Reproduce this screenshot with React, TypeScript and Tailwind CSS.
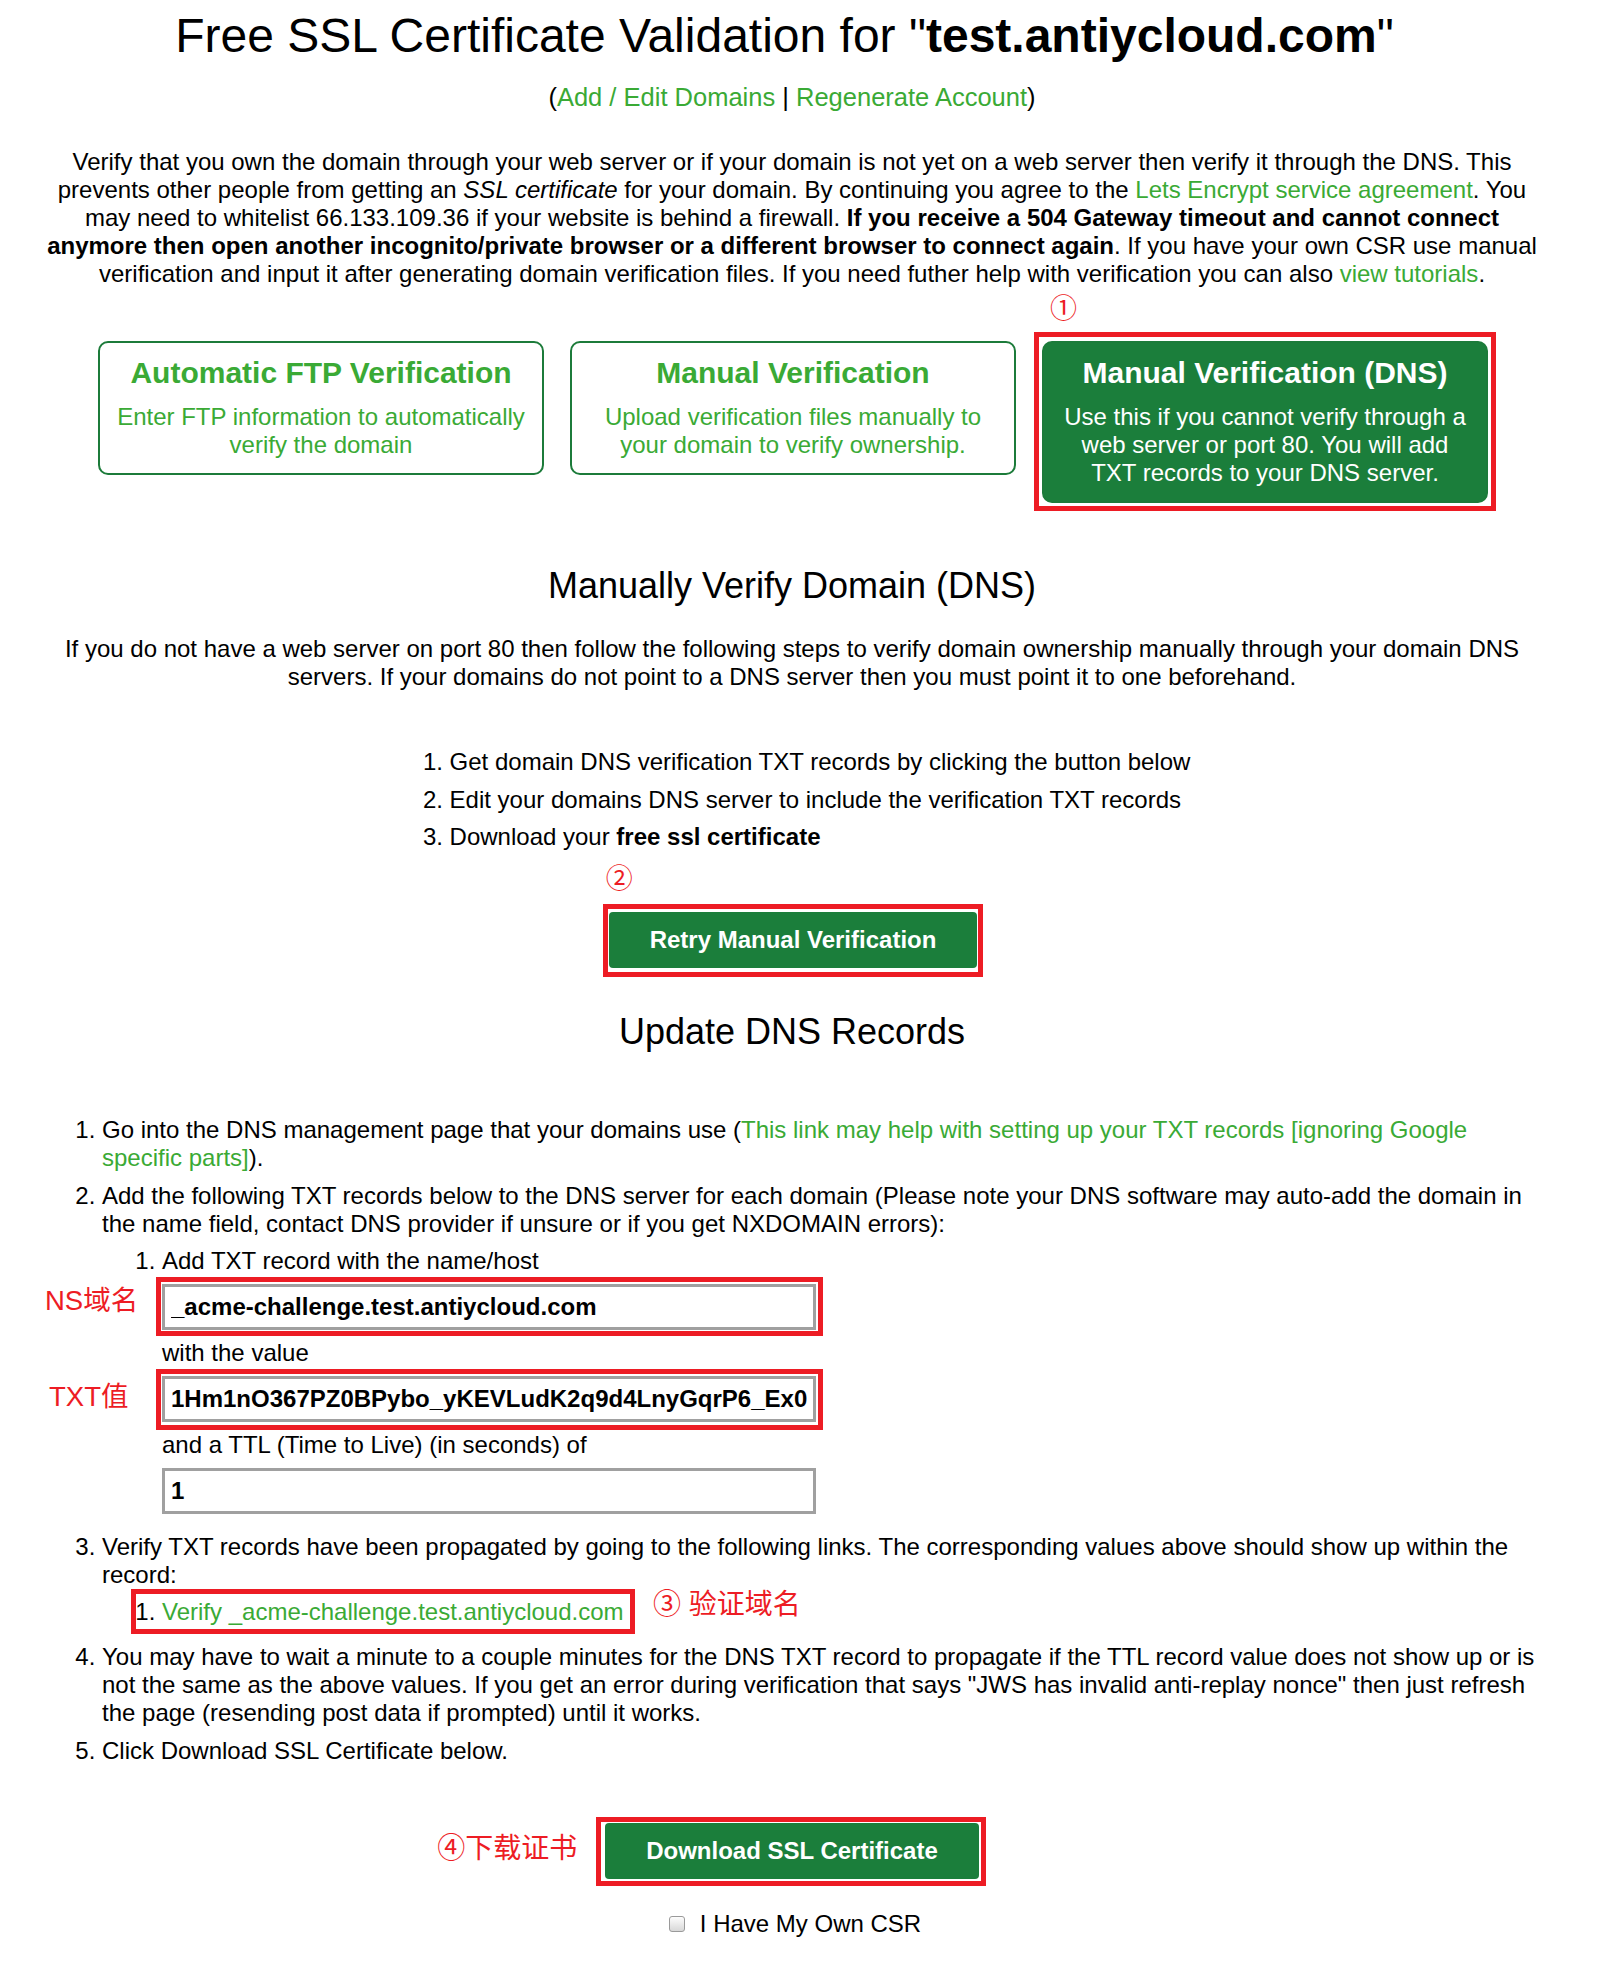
import type { ReactNode } from "react";

const cn = (...parts: (string | false | undefined)[]) => parts.filter(Boolean).join(" ");

const Annotation = ({ className, children }: { className: string; children: ReactNode }) => (
  <span
    className={cn(
      "pointer-events-none absolute whitespace-nowrap leading-[36px] text-[#ed1c24] font-['Liberation_Sans','Noto_Sans_CJK_SC',sans-serif]",
      className
    )}
  >
    {children}
  </span>
);

const RedBox = ({ className }: { className: string }) => (
  <span className={cn("pointer-events-none absolute border-[5px] border-[#ed1c24]", className)} />
);

const GreenLink = ({ children }: { children: ReactNode }) => (
  <a href="#" className="text-[#3aaa35]">
    {children}
  </a>
);

const VerifyCard = ({ title, text, active }: { title: string; text: string; active?: boolean }) => (
  <div
    className={cn(
      "w-[446px] rounded-[10px] border-2 border-[#1c7b3a] px-[14px] pt-[13px] pb-[14px] text-center",
      active ? "bg-[#1b7e3b] text-white" : "bg-white text-[#3aaa35]"
    )}
  >
    <h3 className="text-[30px] font-bold leading-[34px]">{title}</h3>
    <p className="mt-[13px] text-[24px] leading-[28px]">{text}</p>
  </div>
);

const GreenButton = ({ children }: { children: ReactNode }) => (
  <button className="rounded-[4px] bg-[#1b7e3b] px-[41px] py-[14px] text-[24px] font-bold leading-[28px] text-white">
    {children}
  </button>
);

const RecordInput = ({ value }: { value: string }) => (
  <input
    readOnly
    value={value}
    className="block h-[46px] w-[654px] border-[3px] border-[#a0a0a0] bg-white px-[6px] text-[24px] font-bold text-black outline-none"
  />
);

const App = () => {
  return (
    <div className="min-h-[1973px] w-full bg-white text-black font-['Liberation_Sans',Arial,'Noto_Sans_CJK_SC',sans-serif]">
      <main className="w-[1584px] px-[42px] pt-[8px] pb-[34px] text-center">
        <h1 className="pr-[15px] text-[48px] leading-[55px]">
          Free SSL Certificate Validation for "<b>test.antiycloud.com</b>"
        </h1>
        <p className="mt-[20px] text-[25.5px] leading-[29px]">
          (<GreenLink>Add / Edit Domains</GreenLink> | <GreenLink>Regenerate Account</GreenLink>)
        </p>

        <p className="mt-[36px] text-[24px] leading-[28px]">
          Verify that you own the domain through your web server or if your domain is not yet on a web server then
          verify it through the DNS. This prevents other people from getting an <i>SSL certificate</i> for your
          domain. By continuing you agree to the <GreenLink>Lets Encrypt service agreement</GreenLink>. You may need
          to whitelist 66.133.109.36 if your website is behind a firewall.{" "}
          <b>
            If you receive a 504 Gateway timeout and cannot connect anymore then open another incognito/private
            browser or a different browser to connect again
          </b>
          . If you have your own CSR use manual verification and input it after generating domain verification files.
          If you need futher help with verification you can also <GreenLink>view tutorials</GreenLink>.
        </p>

        <div className="mt-[53px] flex items-start justify-center gap-[26px] pl-[2px]">
          <VerifyCard
            title="Automatic FTP Verification"
            text="Enter FTP information to automatically verify the domain"
          />
          <VerifyCard
            title="Manual Verification"
            text="Upload verification files manually to your domain to verify ownership."
          />
          <div className="relative">
            <VerifyCard
              active
              title="Manual Verification (DNS)"
              text="Use this if you cannot verify through a web server or port 80. You will add TXT records to your DNS server."
            />
            <RedBox className="left-[-8px] right-[-8px] top-[-9px] bottom-[-8px]" />
            <Annotation className="left-[8px] top-[-50px] text-[27px]">①</Annotation>
          </div>
        </div>

        <h2 className="mt-[62px] text-[36px] leading-[41px]">Manually Verify Domain (DNS)</h2>
        <p className="mt-[29px] text-[24px] leading-[28px]">
          If you do not have a web server on port 80 then follow the following steps to verify domain ownership
          manually through your domain DNS servers. If your domains do not point to a DNS server then you must point
          it to one beforehand.
        </p>

        <div className="mt-[57px] flex justify-center pr-[4px]">
          <ol className="list-decimal pl-[60px] text-left text-[24px] leading-[28px]">
            <li className="pb-[9.5px]">Get domain DNS verification TXT records by clicking the button below</li>
            <li className="pb-[9.5px]">Edit your domains DNS server to include the verification TXT records</li>
            <li className="pb-[9.5px]">
              Download your <b>free ssl certificate</b>
            </li>
          </ol>
        </div>

        <div className="mt-[51.5px] flex justify-center pl-[2px]">
          <div className="relative">
            <GreenButton>Retry Manual Verification</GreenButton>
            <RedBox className="left-[-6px] right-[-6px] top-[-8px] bottom-[-9px]" />
            <Annotation className="left-[-3px] top-[-51px] text-[27px]">②</Annotation>
          </div>
        </div>

        <h2 className="mt-[43px] text-[36px] leading-[41px]">Update DNS Records</h2>

        <ol className="mt-[64px] list-decimal pl-[60px] text-left text-[24px] leading-[28px]">
          <li className="pb-[9.5px]">
            Go into the DNS management page that your domains use (
            <GreenLink>This link may help with setting up your TXT records [ignoring Google specific parts]</GreenLink>
            ).
          </li>
          <li className="pb-[9.5px]">
            Add the following TXT records below to the DNS server for each domain (Please note your DNS software may
            auto-add the domain in the name field, contact DNS provider if unsure or if you get NXDOMAIN errors):
            <ol className="mt-[9px] list-decimal pl-[60px]">
              <li className="pb-[9.5px]">
                Add TXT record with the name/host
                <div className="relative mt-[9px] w-[654px]">
                  <RecordInput value="_acme-challenge.test.antiycloud.com" />
                  <RedBox className="left-[-6px] right-[-7px] top-[-7px] bottom-[-6px]" />
                  <Annotation className="left-[-117px] top-[-1px] text-[27.5px]">NS域名</Annotation>
                </div>
                <div className="mt-[9px]">with the value</div>
                <div className="relative mt-[9px] w-[654px]">
                  <RecordInput value="1Hm1nO367PZ0BPybo_yKEVLudK2q9d4LnyGqrP6_Ex0" />
                  <RedBox className="left-[-6px] right-[-7px] top-[-7px] bottom-[-8px]" />
                  <Annotation className="left-[-113px] top-[3px] text-[27.5px]">TXT值</Annotation>
                </div>
                <div className="mt-[9px]">and a TTL (Time to Live) (in seconds) of</div>
                <div className="mt-[9px] w-[654px]">
                  <RecordInput value="1" />
                </div>
              </li>
            </ol>
          </li>
          <li className="pb-[9px]">
            Verify TXT records have been propagated by going to the following links. The corresponding values above
            should show up within the record:
            <ol className="mt-[9px] list-decimal pl-[60px]">
              <li className="relative pb-[8.5px]">
                <GreenLink>Verify _acme-challenge.test.antiycloud.com</GreenLink>
                <RedBox className="left-[-31px] top-[-9px] h-[45px] w-[504px]" />
                <Annotation className="left-[491px] top-[-11px] text-[28px]">③ 验证域名</Annotation>
              </li>
            </ol>
          </li>
          <li className="pb-[9.5px]">
            You may have to wait a minute to a couple minutes for the DNS TXT record to propagate if the TTL record
            value does not show up or is not the same as the above values. If you get an error during verification
            that says "JWS has invalid anti-replay nonce" then just refresh the page (resending post data if prompted)
            until it works.
          </li>
          <li className="pb-[9.5px]">Click Download SSL Certificate below.</li>
        </ol>

        <div className="mt-[49px] flex justify-center">
          <div className="relative">
            <GreenButton>Download SSL Certificate</GreenButton>
            <RedBox className="left-[-9px] right-[-7px] top-[-6px] bottom-[-7px]" />
            <Annotation className="left-[-168px] top-[8px] text-[28px]">④下载证书</Annotation>
          </div>
        </div>

        <div className="mt-[31px] flex justify-center pl-[6px]">
          <label className="inline-flex items-center gap-[15px] text-[24px] leading-[28px]">
            <span className="h-[16px] w-[16px] rounded-[3px] border border-[#9a9a9a] bg-linear-to-b from-[#fdfdfd] to-[#d8d8d8]" />
            I Have My Own CSR
          </label>
        </div>
      </main>
    </div>
  );
};

export default App;
